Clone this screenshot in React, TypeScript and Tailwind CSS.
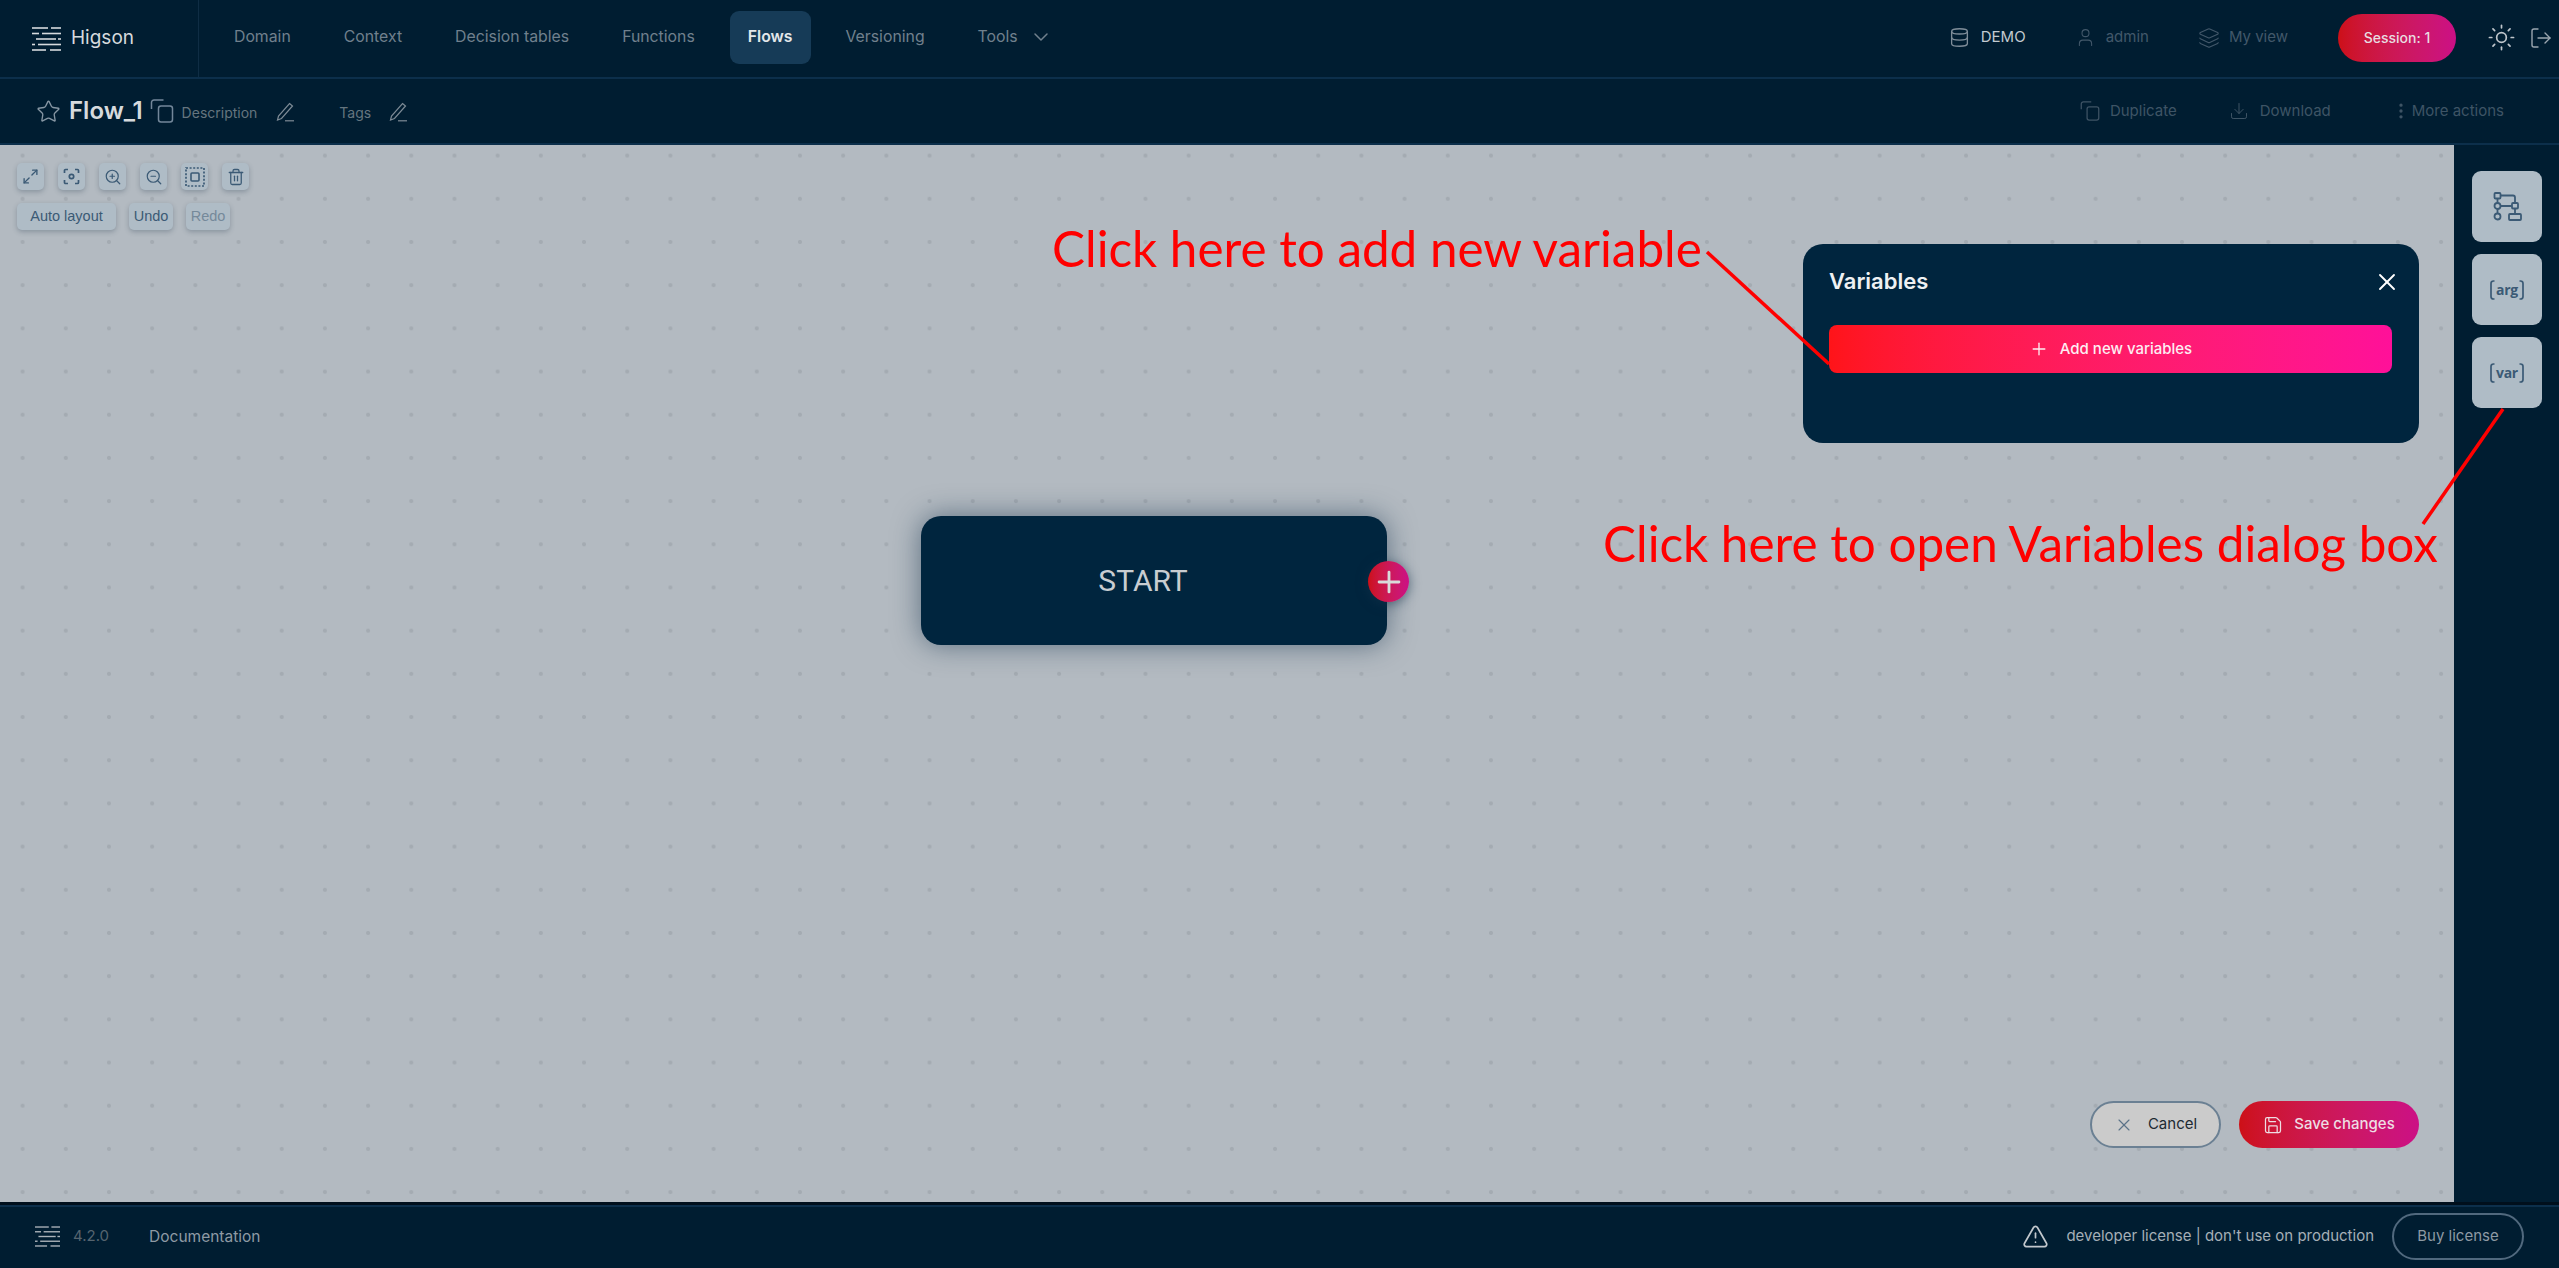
import React from "react";
import { Star, ChevronDown, Database, User, Layers, Sun, LogOut, Download, MoreVertical, X, Plus, Save, TriangleAlert, Maximize2, ZoomIn, ZoomOut, Trash2 } from "lucide-react";

function Logo({ className }: { className?: string }) {
  const rows: [number, number][][] = [
    [[0, 16], [19, 29]],
    [[0, 7], [10, 29]],
    [[4, 24], [26, 29]],
    [[0, 3], [6, 29]],
    [[0, 14], [18, 29]],
  ];
  return (
    <svg viewBox="0 0 29 26" className={className} fill="none" stroke="currentColor" strokeWidth="1.6">
      {rows.map((r, i) =>
        r.map((s, j) => <line key={`${i}-${j}`} x1={s[0]} x2={s[1]} y1={2 + i * 5.5} y2={2 + i * 5.5} />)
      )}
    </svg>
  );
}

function CopyIcon({ className, size }: { className?: string; size: number }) {
  return (
    <svg viewBox="0 0 23 24" width={size} height={size} className={className} fill="none" stroke="currentColor" strokeWidth="1.5">
      <rect x="8" y="7" width="14" height="16" rx="2.5" />
      <path d="M1 10V3.5A2.5 2.5 0 0 1 3.5 1H13" />
    </svg>
  );
}

function PenIcon({ className }: { className?: string }) {
  return (
    <svg viewBox="0 0 19 20" width="19" height="20" className={className} fill="none" stroke="currentColor" strokeWidth="1.2">
      <path d="M13.5 1.5 16.5 4 5.5 16.5 1.5 18 2.5 14Z" />
      <path d="M9 18.8H18" />
    </svg>
  );
}

const navItems = ["Domain", "Context", "Decision tables", "Functions", "Flows", "Versioning"];

function ToolButton({ children }: { children: React.ReactNode }) {
  return (
    <button className="flex h-[27px] w-[27px] items-center justify-center rounded-[5px] bg-[#afbcc6] text-[#3b5a75] shadow-[0_2px_5px_rgba(40,60,80,0.3)]">
      {children}
    </button>
  );
}

function TextTool({ label, muted, w }: { label: string; muted?: boolean; w: string }) {
  return (
    <button className={`h-[27px] ${w} rounded-[5px] bg-[#afbcc6] text-[14.5px] shadow-[0_2px_5px_rgba(40,60,80,0.3)] [font-family:'Liberation_Sans',sans-serif] ${muted ? "text-[#75899a]" : "text-[#3b5a75]"}`}>
      {label}
    </button>
  );
}

function SideButton({ children }: { children: React.ReactNode }) {
  return (
    <button className="flex h-[71px] w-[70px] items-center justify-center rounded-[9px] bg-[#afbcc6] text-[#3b5a75]">
      {children}
    </button>
  );
}

function Bracket({ word }: { word: string }) {
  return (
    <span className="flex items-center gap-[1px] text-[14px] font-bold tracking-[-0.3px] text-[#3b5a75] [font-family:'Open_Sans',sans-serif]">
      <svg width="5" height="20" viewBox="0 0 5 20" fill="none" stroke="currentColor" strokeWidth="1.7"><path d="M4.5 1H3.5Q1 1 1 3.5V16.5Q1 19 3.5 19H4.5" /></svg>
      {word}
      <svg width="5" height="20" viewBox="0 0 5 20" fill="none" stroke="currentColor" strokeWidth="1.7"><path d="M.5 1H1.5Q4 1 4 3.5V16.5Q4 19 1.5 19H.5" /></svg>
    </span>
  );
}

export default function App() {
  return (
    <div className="relative flex h-[1268px] w-[2559px] flex-col overflow-hidden bg-[#001d31] text-[15px] [font-family:Inter,sans-serif]">
      <header className="flex h-[79px] shrink-0 items-stretch border-b-2 border-[#0c2f4b]">
        <div className="flex w-[199px] shrink-0 items-center gap-[10px] border-r border-[#0f2d44] pl-[32px] text-[#d6dadd]">
          <Logo className="h-[26px] w-[29px]" />
          <span className="text-[19px]">Higson</span>
        </div>
        <nav className="ml-[17px] flex items-center gap-[17px] pb-[3px] text-[15.8px] text-[#70808d]">
          {navItems.map((n) => (
            <span key={n} className={n === "Flows" ? "flex h-[53px] items-center rounded-[9px] bg-[#163b57] px-[18px] font-semibold text-[#e3e7ea]" : "px-[18px]"}>
              {n}
            </span>
          ))}
          <span className="flex items-center gap-[11px] pl-[18px]">
            Tools <ChevronDown size={24} strokeWidth={1.5} />
          </span>
        </nav>
        <div className="ml-auto flex items-center pb-[2px] pr-[6px]">
          <Database size={21} strokeWidth={1.5} className="text-[#7f8d99]" />
          <span className="ml-[11px] text-[#c3cad0]">DEMO</span>
          <User size={21} strokeWidth={1.2} className="ml-[49px] text-[#42586a]" />
          <span className="ml-[10px] text-[#42586a]">admin</span>
          <Layers size={22} strokeWidth={1.2} className="ml-[49px] text-[#42586a]" />
          <span className="ml-[9px] text-[#42586a]">My view</span>
          <button className="ml-[50px] flex h-[48px] w-[118px] items-center justify-center rounded-full bg-gradient-to-r from-[#cd1016] to-[#cc0f85] text-[14px] font-medium text-[#e8dde0]">
            Session: 1
          </button>
          <Sun size={29} strokeWidth={1.4} className="ml-[31px] text-[#bfc6cc]" />
          <LogOut size={24} strokeWidth={1.4} className="ml-[13px] text-[#9aa6b0]" />
        </div>
      </header>

      <div className="flex h-[66px] shrink-0 items-center border-b-2 border-[#0c2f4b] pl-[36px]">
        <Star size={25} strokeWidth={1.3} className="text-[#8696a3]" />
        <span className="ml-[8px] text-[24px] font-semibold text-[#d6dadd]">Flow_1</span>
        <CopyIcon size={24} className="ml-[7px] text-[#73879a]" />
        <span className="ml-[8px] mt-[3px] text-[14px] text-[#65757f]">Description</span>
        <PenIcon className="ml-[19px] mt-[2px] text-[#7d8b96]" />
        <span className="ml-[44px] mt-[3px] text-[14px] text-[#65757f]">Tags</span>
        <PenIcon className="ml-[18px] mt-[2px] text-[#7d8b96]" />
        <div className="ml-auto flex items-center pr-[55px] text-[#3e5465]">
          <CopyIcon size={20} />
          <span className="ml-[10px]">Duplicate</span>
          <Download size={20} strokeWidth={1.2} className="ml-[52px]" />
          <span className="ml-[11px]">Download</span>
          <MoreVertical size={20} strokeWidth={2} className="ml-[60px]" />
          <span className="ml-[1px]">More actions</span>
        </div>
      </div>

      <div className="flex min-h-0 flex-1">
        <main className="relative flex-1 overflow-hidden bg-[#b3bac1] bg-[radial-gradient(circle,#a4abb2_1.8px,transparent_2.3px)] bg-[size:43.2px_43.2px] bg-[position:1px_-11px]">
          <div className="absolute left-[17px] top-[18px] flex flex-col gap-[13px]">
            <div className="flex gap-[14px]">
              <ToolButton><Maximize2 size={17} strokeWidth={1.9} /></ToolButton>
              <ToolButton>
                <svg width="17" height="17" viewBox="0 0 17 17" fill="none" stroke="currentColor" strokeWidth="1.7">
                  <path d="M1.5 5V2.5a1 1 0 0 1 1-1H5M12 1.5h2.5a1 1 0 0 1 1 1V5M15.5 12v2.5a1 1 0 0 1-1 1H12M5 15.5H2.5a1 1 0 0 1-1-1V12" />
                  <circle cx="8.5" cy="8.5" r="2.2" />
                </svg>
              </ToolButton>
              <ToolButton><ZoomIn size={18} strokeWidth={1.6} /></ToolButton>
              <ToolButton><ZoomOut size={18} strokeWidth={1.6} /></ToolButton>
              <ToolButton>
                <svg width="20" height="20" viewBox="0 0 20 20" fill="none" stroke="currentColor">
                  <rect x="1" y="1" width="18" height="18" strokeWidth="1.7" strokeDasharray="2 1.6" />
                  <rect x="6" y="6" width="8" height="8" rx="1" strokeWidth="1.6" />
                </svg>
              </ToolButton>
              <ToolButton><Trash2 size={18} strokeWidth={1.7} /></ToolButton>
            </div>
            <div className="flex gap-[13px]">
              <TextTool label="Auto layout" w="w-[99px]" />
              <TextTool label="Undo" w="w-[44px]" />
              <TextTool label="Redo" muted w="w-[44px]" />
            </div>
          </div>

          <div className="absolute left-[921px] top-[371px] flex h-[129px] w-[466px] items-center justify-center rounded-[20px] bg-[#00253e] pr-[22px] text-[30px] text-[#c8cdd1] shadow-[0_0_28px_rgba(20,50,75,0.55)] [font-family:Roboto,sans-serif]">
            START
            <span className="absolute -right-[22px] top-[45px] flex h-[41px] w-[41px] items-center justify-center rounded-full bg-gradient-to-r from-[#cd1016] to-[#cc0f85] shadow-[0_2px_12px_rgba(20,50,75,0.6)]">
              <Plus size={34} strokeWidth={2} className="text-[#d9d9d9]" />
            </span>
          </div>

          <section className="absolute left-[1803px] top-[99px] h-[199px] w-[616px] rounded-[20px] bg-[#00253e] px-[26px]">
            <div className="flex h-[74px] items-center justify-between pt-[1px]">
              <h2 className="text-[22px] font-semibold text-[#eef1f3]">Variables</h2>
              <X size={28} strokeWidth={1.6} className="-mr-[8px] text-white" />
            </div>
            <button className="mt-[7px] flex h-[48px] w-[563px] items-center justify-center gap-[11px] rounded-[8px] bg-gradient-to-r from-[#ff1418] to-[#ff1099] text-[15px] font-medium text-[#fdeef2]">
              <Plus size={20} strokeWidth={1.6} />
              Add new variables
            </button>
          </section>

          <div className="absolute bottom-[54px] right-[35px] flex gap-[18px]">
            <button className="flex h-[47px] w-[131px] items-center justify-center gap-[14px] rounded-full border-2 border-[#6b8093] bg-[#cbcbcb] text-[15px] text-[#1d2a33]">
              <X size={20} strokeWidth={1.4} className="text-[#5b7388]" />
              Cancel
            </button>
            <button className="flex h-[47px] w-[180px] items-center justify-center gap-[11px] rounded-full bg-gradient-to-r from-[#cd1016] to-[#cc0f85] text-[15px] font-medium text-[#eedde3]">
              <Save size={20} strokeWidth={1.5} />
              Save changes
            </button>
          </div>

          <span className="absolute left-[1052px] top-[70px] whitespace-nowrap text-[49.4px] leading-[66px] text-[#ff0000] [font-family:Lato,sans-serif]">
            Click here to add new variable
          </span>
          <span className="absolute left-[1603px] top-[365px] whitespace-nowrap text-[49.4px] leading-[66px] text-[#ff0000] [font-family:Lato,sans-serif]">
            Click here to open Variables dialog box
          </span>
        </main>

        <aside className="flex w-[105px] shrink-0 flex-col gap-[12px] pl-[18px] pt-[26px]">
          <SideButton>
            <svg width="29" height="29" viewBox="0 0 29 29" fill="none" stroke="currentColor" strokeWidth="1.8">
              <rect x="1.5" y="1" width="6" height="5.5" rx="1" />
              <path d="M7.5 3.5H20Q22 3.5 22 5.5V11" />
              <rect x="19" y="11" width="6" height="5.5" rx="1" />
              <circle cx="4.5" cy="14" r="3" />
              <path d="M4.5 6.5V11M4.5 17V21M7.5 14H19M22 16.5V22" />
              <circle cx="4.5" cy="24.5" r="3" />
              <rect x="16" y="22" width="12" height="6" rx="1" />
            </svg>
          </SideButton>
          <SideButton><Bracket word="arg" /></SideButton>
          <SideButton><Bracket word="var" /></SideButton>
        </aside>
      </div>

      <footer className="flex h-[66px] shrink-0 items-center border-t-[3px] border-[#000f1c] pr-[35px] text-[#8e9aa4] shadow-[inset_0_2px_0_#0c2f4b]">
        <Logo className="ml-[35px] h-[23px] w-[25px] text-[#aab2b9]" />
        <span className="ml-[13px] text-[#55646f]">4.2.0</span>
        <span className="ml-[40px] text-[15.5px]">Documentation</span>
        <TriangleAlert size={27} strokeWidth={1.5} className="ml-auto text-[#c2c8cd]" />
        <span className="ml-[17px] text-[#a5afb7]">developer license | don't use on production</span>
        <button className="ml-[18px] flex h-[47px] w-[132px] items-center justify-center rounded-full border-2 border-[#51697e] text-[#8e9aa4]">
          Buy license
        </button>
      </footer>

      <svg className="pointer-events-none absolute inset-0 h-full w-full" fill="none" stroke="#ff0000" strokeWidth="3.5">
        <line x1="1707" y1="252" x2="1829" y2="364" />
        <line x1="2503" y1="409" x2="2423" y2="524" />
      </svg>
    </div>
  );
}
